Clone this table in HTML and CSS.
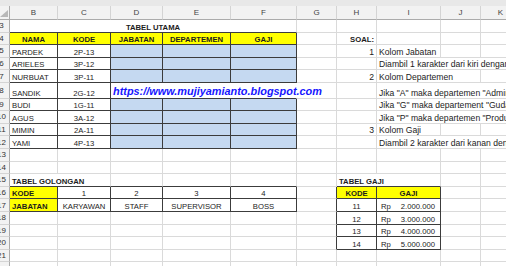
FILE: index.html
```html
<!DOCTYPE html>
<html lang="id">
<head>
<meta charset="utf-8">
<title>Tabel Utama</title>
<link rel="stylesheet" href="styles.css">
</head>
<body>
<div class="chrome"></div>
<table class="sheet">
  <colgroup>
    <col class="c-rh"><col class="c-b"><col class="c-c"><col class="c-d"><col class="c-e"><col class="c-f"><col class="c-g"><col class="c-h"><col class="c-i"><col class="c-j"><col class="c-k">
  </colgroup>
  <thead>
    <tr class="colhdr">
      <th class="corner"><svg width="9" height="13" viewBox="0 0 9 13"><polygon points="0,11 8,4 8,11" fill="#b8b8b8"/></svg></th>
      <th>B</th><th>C</th><th>D</th><th>E</th><th>F</th><th>G</th><th>H</th><th>I</th><th>J</th><th>K</th>
    </tr>
  </thead>
  <tbody>
    <tr><th class="rh"><span>3</span></th><td class="b c db" colspan="5">TABEL UTAMA</td><td></td><td></td><td></td><td></td><td></td></tr>
    <tr><th class="rh"><span>4</span></th><td class="t y c">NAMA</td><td class="t y c">KODE</td><td class="t y c">JABATAN</td><td class="t y c">DEPARTEMEN</td><td class="t y c">GAJI</td><td></td><td class="b r">SOAL:</td><td></td><td></td><td></td></tr>
    <tr><th class="rh"><span>5</span></th><td class="t">PARDEK</td><td class="t c">2P-13</td><td class="t bl"></td><td class="t bl"></td><td class="t bl"></td><td></td><td class="r n">1</td><td class="n">Kolom Jabatan</td><td></td><td></td></tr>
    <tr><th class="rh"><span>6</span></th><td class="t">ARIELES</td><td class="t c">3P-12</td><td class="t bl"></td><td class="t bl"></td><td class="t bl"></td><td></td><td></td><td class="n" colspan="3">Diambil 1 karakter dari kiri dengan fungsi LEFT</td></tr>
    <tr><th class="rh"><span>7</span></th><td class="t">NURBUAT</td><td class="t c">3P-11</td><td class="t bl"></td><td class="t bl"></td><td class="t bl"></td><td></td><td class="r n">2</td><td class="n" colspan="2">Kolom Departemen</td><td></td></tr>
    <tr class="tall"><th class="rh"><span>8</span></th><td class="t">SANDIK</td><td class="t c">2G-12</td><td class="t url" colspan="3">https://www.mujiyamianto.blogspot.com</td><td></td><td></td><td class="n" colspan="3">Jika "A" maka departemen "Administrasi"</td></tr>
    <tr><th class="rh"><span>9</span></th><td class="t">BUDI</td><td class="t c">1G-11</td><td class="t bl"></td><td class="t bl"></td><td class="t bl"></td><td></td><td></td><td class="n" colspan="3">Jika "G" maka departement "Gudang"</td></tr>
    <tr><th class="rh"><span>10</span></th><td class="t">AGUS</td><td class="t c">3A-12</td><td class="t bl"></td><td class="t bl"></td><td class="t bl"></td><td></td><td></td><td class="n" colspan="3">Jika "P" maka departemen "Produksi"</td></tr>
    <tr><th class="rh"><span>11</span></th><td class="t">MIMIN</td><td class="t c">2A-11</td><td class="t bl"></td><td class="t bl"></td><td class="t bl"></td><td></td><td class="r n">3</td><td class="n">Kolom Gaji</td><td></td><td></td></tr>
    <tr><th class="rh"><span>12</span></th><td class="t">YAMI</td><td class="t c">4P-13</td><td class="t bl"></td><td class="t bl"></td><td class="t bl"></td><td></td><td></td><td class="n" colspan="3">Diambil 2 karakter dari kanan dengan fungsi RIGHT</td></tr>
    <tr><th class="rh"><span>13</span></th><td></td><td></td><td></td><td></td><td></td><td></td><td></td><td></td><td></td><td></td></tr>
    <tr><th class="rh"><span>14</span></th><td></td><td></td><td></td><td></td><td></td><td></td><td></td><td></td><td></td><td></td></tr>
    <tr><th class="rh"><span>15</span></th><td class="b db" colspan="2">TABEL GOLONGAN</td><td class="db"></td><td class="db"></td><td class="db"></td><td></td><td class="b db" colspan="2">TABEL GAJI</td><td></td><td></td></tr>
    <tr><th class="rh"><span>16</span></th><td class="t y">KODE</td><td class="t c">1</td><td class="t c">2</td><td class="t c">3</td><td class="t c">4</td><td class="dr"></td><td class="t y c">KODE</td><td class="t y c">GAJI</td><td></td><td></td></tr>
    <tr><th class="rh"><span>17</span></th><td class="t y">JABATAN</td><td class="t c">KARYAWAN</td><td class="t c">STAFF</td><td class="t c">SUPERVISOR</td><td class="t c">BOSS</td><td class="dr"></td><td class="t c">11</td><td class="t rp"><div><span>Rp</span><span>2.000.000</span></div></td><td></td><td></td></tr>
    <tr><th class="rh"><span>18</span></th><td></td><td></td><td></td><td></td><td></td><td class="dr"></td><td class="t c">12</td><td class="t rp"><div><span>Rp</span><span>3.000.000</span></div></td><td></td><td></td></tr>
    <tr><th class="rh"><span>19</span></th><td></td><td></td><td></td><td></td><td></td><td class="dr"></td><td class="t c">13</td><td class="t rp"><div><span>Rp</span><span>4.000.000</span></div></td><td></td><td></td></tr>
    <tr><th class="rh"><span>20</span></th><td></td><td></td><td></td><td></td><td></td><td class="dr"></td><td class="t c">14</td><td class="t rp"><div><span>Rp</span><span>5.000.000</span></div></td><td></td><td></td></tr>
    <tr><th class="rh"><span>21</span></th><td></td><td></td><td></td><td></td><td></td><td></td><td></td><td></td><td></td><td></td></tr>
    <tr><th class="rh"><span>22</span></th><td></td><td></td><td></td><td></td><td></td><td></td><td></td><td></td><td></td><td></td></tr>
  </tbody>
</table>
</body>
</html>
```

FILE: styles.css
```css
* { box-sizing: border-box; }
html, body { margin: 0; padding: 0; background: #fff; overflow: hidden; }
body {
  width: 506px;
  height: 266px;
  font-family: "Liberation Sans", Arial, sans-serif;
  color: #1c1c1c;
}
.chrome { height: 6px; background: #e8e8e8; }

.sheet {
  border-collapse: separate;
  border-spacing: 0;
  table-layout: fixed;
  width: 521px;
}
.c-rh { width: 10px; }
.c-b { width: 48px; }
.c-c { width: 53px; }
.c-d { width: 52px; }
.c-e { width: 68px; }
.c-f { width: 66px; }
.c-g, .c-h, .c-j, .c-k { width: 40px; }
.c-i { width: 64px; }

.colhdr th {
  height: 13px;
  padding: 0;
  background: #f2f2f2;
  border-right: 1px solid #d4d4d4;
  border-bottom: 1px solid #ababab;
  font-weight: normal;
  font-size: 8px;
  color: #444;
  text-align: center;
  vertical-align: middle;
}
.colhdr .corner { text-align: left; vertical-align: top; border-right-color: #ababab; }
.corner svg { display: block; }

.rh {
  padding: 0;
  background: #f2f2f2;
  border-right: 1px solid #ababab;
  border-bottom: 1px solid #d4d4d4;
  font-weight: normal;
  font-size: 8px;
  color: #333;
  vertical-align: middle;
}
.rh span { display: block; width: 20px; margin-left: -8.5px; text-align: center; }

tbody tr { height: 12.6px; }
tbody tr.tall { height: 15.6px; }

td {
  border-right: 1px solid #dadada;
  border-bottom: 1px solid #dadada;
  padding: 0 2px 0;
  font-size: 7.7px;
  line-height: 9px;
  white-space: nowrap;
  vertical-align: bottom;
}

.t { border-right-color: #3c3c3c; border-bottom-color: #3c3c3c; }
.db { border-bottom-color: #3c3c3c; }
.dr { border-right-color: #3c3c3c; }
.y { background: #ffff00; font-weight: bold; }
.bl { background: #c5d9f1; }
.b { font-weight: bold; }
.c { text-align: center; }
.r { text-align: right; }
.n { font-size: 8.6px; }

.url {
  font-size: 10.9px;
  line-height: 13px;
  font-weight: bold;
  font-style: italic;
  color: #1515ff;
  border-right-color: #fff;
}

.rp div { display: flex; justify-content: space-between; padding: 0 3px 0 2px; }
```
